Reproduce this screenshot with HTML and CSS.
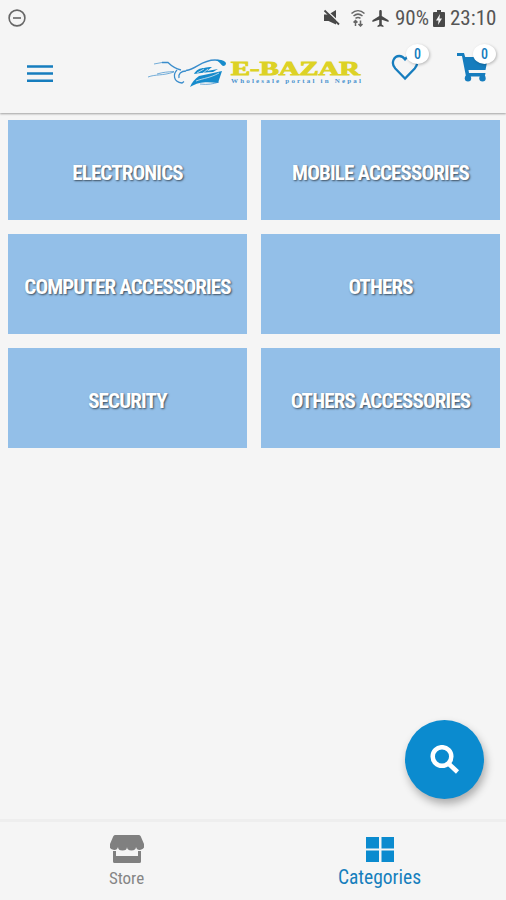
FILE: index.html
```html
<!DOCTYPE html>
<html lang="en">
<head>
    <meta charset="UTF-8">
    <meta name="viewport" content="width=device-width, initial-scale=1.0">
    <title>E-Bazar</title>
    <link rel="stylesheet" href="styles.css">
</head>
<body>
    <div class="app">
        <!-- Header Section -->
        <header class="header">
            <div class="status-bar">
                <svg class="dnd-icon" viewBox="0 0 18 18">
                    <circle cx="9" cy="9" r="7.9" />
                    <path d="M5 9h8" />
                </svg>
                <div class="status-icons">
                    <svg class="mute-icon" viewBox="0 0 18 18">
                        <path d="M1 5.500h4.500L13 1v14.500L5.500 12H1z" />
                        <path class="gap" d="M3 1l15 14" />
                        <path class="slash" d="M1.500 1.500l14.500 14" />
                    </svg>
                    <svg class="wifi-icon" viewBox="0 0 16 18">
                        <path d="M1.500 4.500C5.500.8 10.500.8 14.500 4.500M3.500 7c3-2.500 6-2.500 9 0M5.500 9.300c1.800-1.300 3.200-1.300 5 0" />
                        <path d="M5.500 17v-5.500M3.500 13.500l2-2 2 2M10.500 11.500V17M8.500 15l2 2 2-2" />
                    </svg>
                    <svg class="plane-icon" viewBox="2 2 19 20">
                        <path d="M21 16v-2l-8-5V3.500c0-.83-.67-1.500-1.500-1.500S10 2.670 10 3.500V9l-8 5v2l8-2.500V19l-2 1.500V22l3.500-1 3.500 1v-1.500L13 19v-5.500l8 2.500z" />
                    </svg>
                    <span class="status-text battery-text">90%</span>
                    <svg class="battery-icon" viewBox="0 0 12 17">
                        <path d="M1 2h3V0h4v2h3q1 0 1 1v13q0 1-1 1H1q-1 0-1-1V3q0-1 1-1z" />
                        <path class="bolt" d="M7 4L3 10.500h2.500L5 15l4-6.500H6.500z" />
                    </svg>
                    <span class="status-text time-text">23:10</span>
                </div>
            </div>
            <div class="toolbar">
                <svg class="menu-icon" viewBox="0 0 26 18">
                    <path d="M0 1.500h26M0 8.500h26M0 15.700h26" />
                </svg>
                <svg class="logo" viewBox="0 0 216 34">
                    <!-- Speed lines and wheel -->
                    <g class="logo-lines">
                        <path class="thin" d="M6 8l8-1.500" />
                        <path d="M14 6.500h6c3 3 7 6 13 7.500" />
                        <path class="thin" d="M0 21c8-3 14-1 26-5M9 18c7-2 10-2 17-2.500" />
                        <path d="M29 14c-4 4-4 12 5 13l2-1.500M38 15c-5 0-8 3-7 7" />
                        <path d="M38 14.500C49 13 53 4 67 4c4 0 6 1 8 3" />
                    </g>
                    <!-- Ship -->
                    <path class="logo-ship" d="M42 31c2-5 5-8 9-11 8-2 16-3 23-5l-4 12c-10-1-18-2-28 4z" />
                    <path class="logo-ship" d="M46 18c2-4 6-6 10-6 3-1 5-1 8-1l-5 4 11-2-5 3c-7 0-12 1-19 2zM68 4c5-1 9 1 10 3 0 2-1 3-3 3-2-1-2-3-7-6z" />
                    <path class="logo-cut" d="M49 17l7-4M54 18l6-5M48 25c8-3 14-3 23-8" />
                    <path class="logo-lines thin" d="M52 28c8 1 13 0 19-2" />
                    <text class="logo-name" x="83" y="18.500" textLength="129" lengthAdjust="spacingAndGlyphs">E-BAZAR</text>
                    <text class="logo-tagline" x="83" y="27.200" textLength="130">Wholesale portal in Nepal</text>
                </svg>
                <div class="action heart">
                    <svg viewBox="0 0 28 27">
                        <path d="M14 24.500L4.300 14.500C-.7 9 3 2 8.300 2c2.700 0 4.500 1.600 5.700 3.300C15.200 3.600 17 2 19.700 2 25 2 28.700 9 23.700 14.500z" />
                    </svg>
                    <span class="badge">0</span>
                </div>
                <div class="action cart">
                    <svg viewBox="0 0 31 29">
                        <path d="M0 0h7l1.200 4H31l-2.500 13H11.500l.5 3H28.500l-.7 3.500H9L5 3H0z" />
                        <circle cx="11" cy="25.300" r="3.200" />
                        <circle cx="25.500" cy="25.300" r="3.200" />
                    </svg>
                    <span class="badge">0</span>
                </div>
            </div>
        </header>

        <!-- Category Tiles -->
        <main class="categories">
            <a class="tile"><span>ELECTRONICS</span></a>
            <a class="tile"><span>MOBILE ACCESSORIES</span></a>
            <a class="tile"><span>COMPUTER ACCESSORIES</span></a>
            <a class="tile"><span>OTHERS</span></a>
            <a class="tile"><span>SECURITY</span></a>
            <a class="tile"><span>OTHERS ACCESSORIES</span></a>
        </main>

        <!-- Floating search button -->
        <button class="search-button" aria-label="Search">
            <svg viewBox="0 0 30 30">
                <circle cx="12" cy="11.500" r="9.300" />
                <path d="M18.500 18.500l9 8.500" />
            </svg>
        </button>

        <!-- Bottom Tabs -->
        <nav class="tabs">
            <a class="tab">
                <svg class="store-icon" viewBox="0 0 34 28">
                    <path d="M5.500 0h23q1.500 0 2.200 1.300L34 9v1.500a4 3.500 0 0 1-8 1.500 4.500 3.500 0 0 1-9 0 4.500 3.500 0 0 1-9 0 4 3.500 0 0 1-8-1.500V9l3.300-7.700Q4 0 5.500 0z" />
                    <path d="M3 16h3v5h22v-5h3v10.500q0 1.500-1.500 1.500h-25Q3 28 3 26.500z" />
                </svg>
                <span>Store</span>
            </a>
            <a class="tab active">
                <svg class="grid-icon" viewBox="0 0 28 25">
                    <path d="M0 0h13v11.500H0zM15.500 0H28v11.500H15.500zM0 13.500h13V25H0zM15.500 13.500H28V25H15.500z" />
                </svg>
                <span>Categories</span>
            </a>
        </nav>
    </div>
</body>
</html>
```
FILE: styles.css
```css
/* Global styles */
:root {
    --primary-color: #0b8bcf;
    --icon-color: #167dbe;
    --tile-color: #93bfe8;
    --background: #f5f5f5;
    --gray-color: #858585;
}

body {
    margin: 0;
    background-color: var(--background);
    font-family: 'Roboto Condensed', Roboto, sans-serif;
    font-stretch: 75%;
}

svg {
    display: block;
    flex: none;
}

.app {
    position: relative;
    display: flex;
    flex-direction: column;
    height: 900px;
    overflow: hidden;
}

/* Header styling */
.header {
    height: 113px;
    box-shadow: 0 1px 2px rgba(0, 0, 0, 0.35);
}

.status-bar {
    display: flex;
    justify-content: space-between;
    align-items: center;
    height: 36px;
    padding: 0 9px 0 8px;
}

.dnd-icon {
    width: 18px;
    height: 18px;
    fill: none;
    stroke: #666;
    stroke-width: 1.6;
}

.status-icons {
    display: flex;
    align-items: center;
    fill: #484848;
}

.mute-icon {
    width: 18px;
    height: 18px;
    margin-right: 9px;
}

.mute-icon .gap {
    stroke: var(--background);
    stroke-width: 1.5;
}

.mute-icon .slash {
    stroke: #484848;
    stroke-width: 1.8;
}

.wifi-icon {
    width: 16px;
    height: 18px;
    margin-right: 6px;
    fill: none;
    stroke: #666;
    stroke-width: 1.5;
}

.plane-icon {
    width: 17px;
    height: 17px;
    margin-right: 6px;
}

.status-text {
    font-size: 21px;
    line-height: 36px;
    color: #555;
}

.battery-text {
    width: 34px;
    margin-right: 4px;
}

.battery-icon {
    width: 12px;
    height: 17px;
    margin-right: 5px;
}

.battery-icon .bolt {
    fill: var(--background);
}

.time-text {
    width: 47px;
}

.toolbar {
    display: flex;
    align-items: flex-start;
    height: 77px;
    padding-left: 27px;
}

.menu-icon {
    width: 26px;
    height: 18px;
    margin: 29px 95px 0 0;
    stroke: var(--icon-color);
    stroke-width: 2.4;
}

.logo {
    width: 216px;
    height: 34px;
    margin: 20px 27px 0 0;
}

.logo-lines {
    fill: none;
    stroke: #3a8dcc;
    stroke-width: 1.3;
}

.logo .thin {
    stroke-width: 0.7;
}

.logo-ship {
    fill: #168bcc;
}

.logo-cut {
    fill: none;
    stroke: var(--background);
    stroke-width: 0.7;
}

.logo-name {
    font-family: 'Liberation Serif', serif;
    font-size: 18px;
    font-weight: bold;
    fill: #ddd225;
    stroke: #ddd225;
    stroke-width: 0.9;
}

.logo-tagline {
    font-family: 'Liberation Serif', serif;
    font-size: 7px;
    font-weight: bold;
    fill: #4b93cf;
}

/* Wishlist and cart buttons */
.action {
    position: relative;
    fill: var(--icon-color);
}

.heart {
    margin: 18px 38px 0 0;
}

.heart svg {
    width: 28px;
    height: 27px;
    fill: none;
    stroke: var(--icon-color);
    stroke-width: 2.3;
}

.cart {
    margin-top: 17px;
}

.cart svg {
    width: 31px;
    height: 29px;
}

.badge {
    position: absolute;
    top: -10px;
    left: 15px;
    width: 23px;
    height: 20px;
    border-radius: 50%;
    background-color: white;
    box-shadow: 1px 1px 3px rgba(0, 0, 0, 0.25);
    font-size: 14px;
    font-weight: 500;
    line-height: 20px;
    text-align: center;
    color: var(--icon-color);
}

.cart .badge {
    top: -9px;
    left: 16px;
}

/* Category tiles */
.categories {
    flex: 1;
    display: grid;
    grid-template-columns: 239px 239px;
    grid-auto-rows: 100px;
    align-content: start;
    gap: 14px;
    padding: 7px 8px;
}

.tile {
    display: flex;
    align-items: center;
    justify-content: center;
    background-color: var(--tile-color);
    color: white;
    font-size: 21px;
    font-weight: 700;
    line-height: 24px;
    letter-spacing: -0.85px;
    white-space: nowrap;
    text-shadow: 1px 1px 2px rgba(0, 0, 0, 0.6);
}

.tile span {
    padding-top: 5px;
}

/* Search button */
.search-button {
    position: absolute;
    right: 22px;
    bottom: 101px;
    display: flex;
    align-items: center;
    justify-content: center;
    width: 79px;
    height: 79px;
    padding: 0;
    border: none;
    border-radius: 50%;
    background-color: var(--primary-color);
    box-shadow: 2px 5px 9px rgba(0, 0, 0, 0.3);
}

.search-button svg {
    width: 30px;
    height: 30px;
    fill: none;
    stroke: white;
    stroke-width: 4.5;
}

/* Bottom tabs */
.tabs {
    display: flex;
    height: 78px;
    border-top: 3px solid #eee;
}

.tab {
    flex: 1;
    display: flex;
    flex-direction: column;
    align-items: center;
    color: var(--gray-color);
    fill: #808080;
    font-size: 17px;
}

.tab.active {
    color: #167fbd;
    fill: var(--primary-color);
    font-size: 19.5px;
}

.store-icon {
    width: 34px;
    height: 28px;
    margin: 13px 0 5px;
}

.grid-icon {
    width: 28px;
    height: 25px;
    margin: 15px 0 4px;
}
```
